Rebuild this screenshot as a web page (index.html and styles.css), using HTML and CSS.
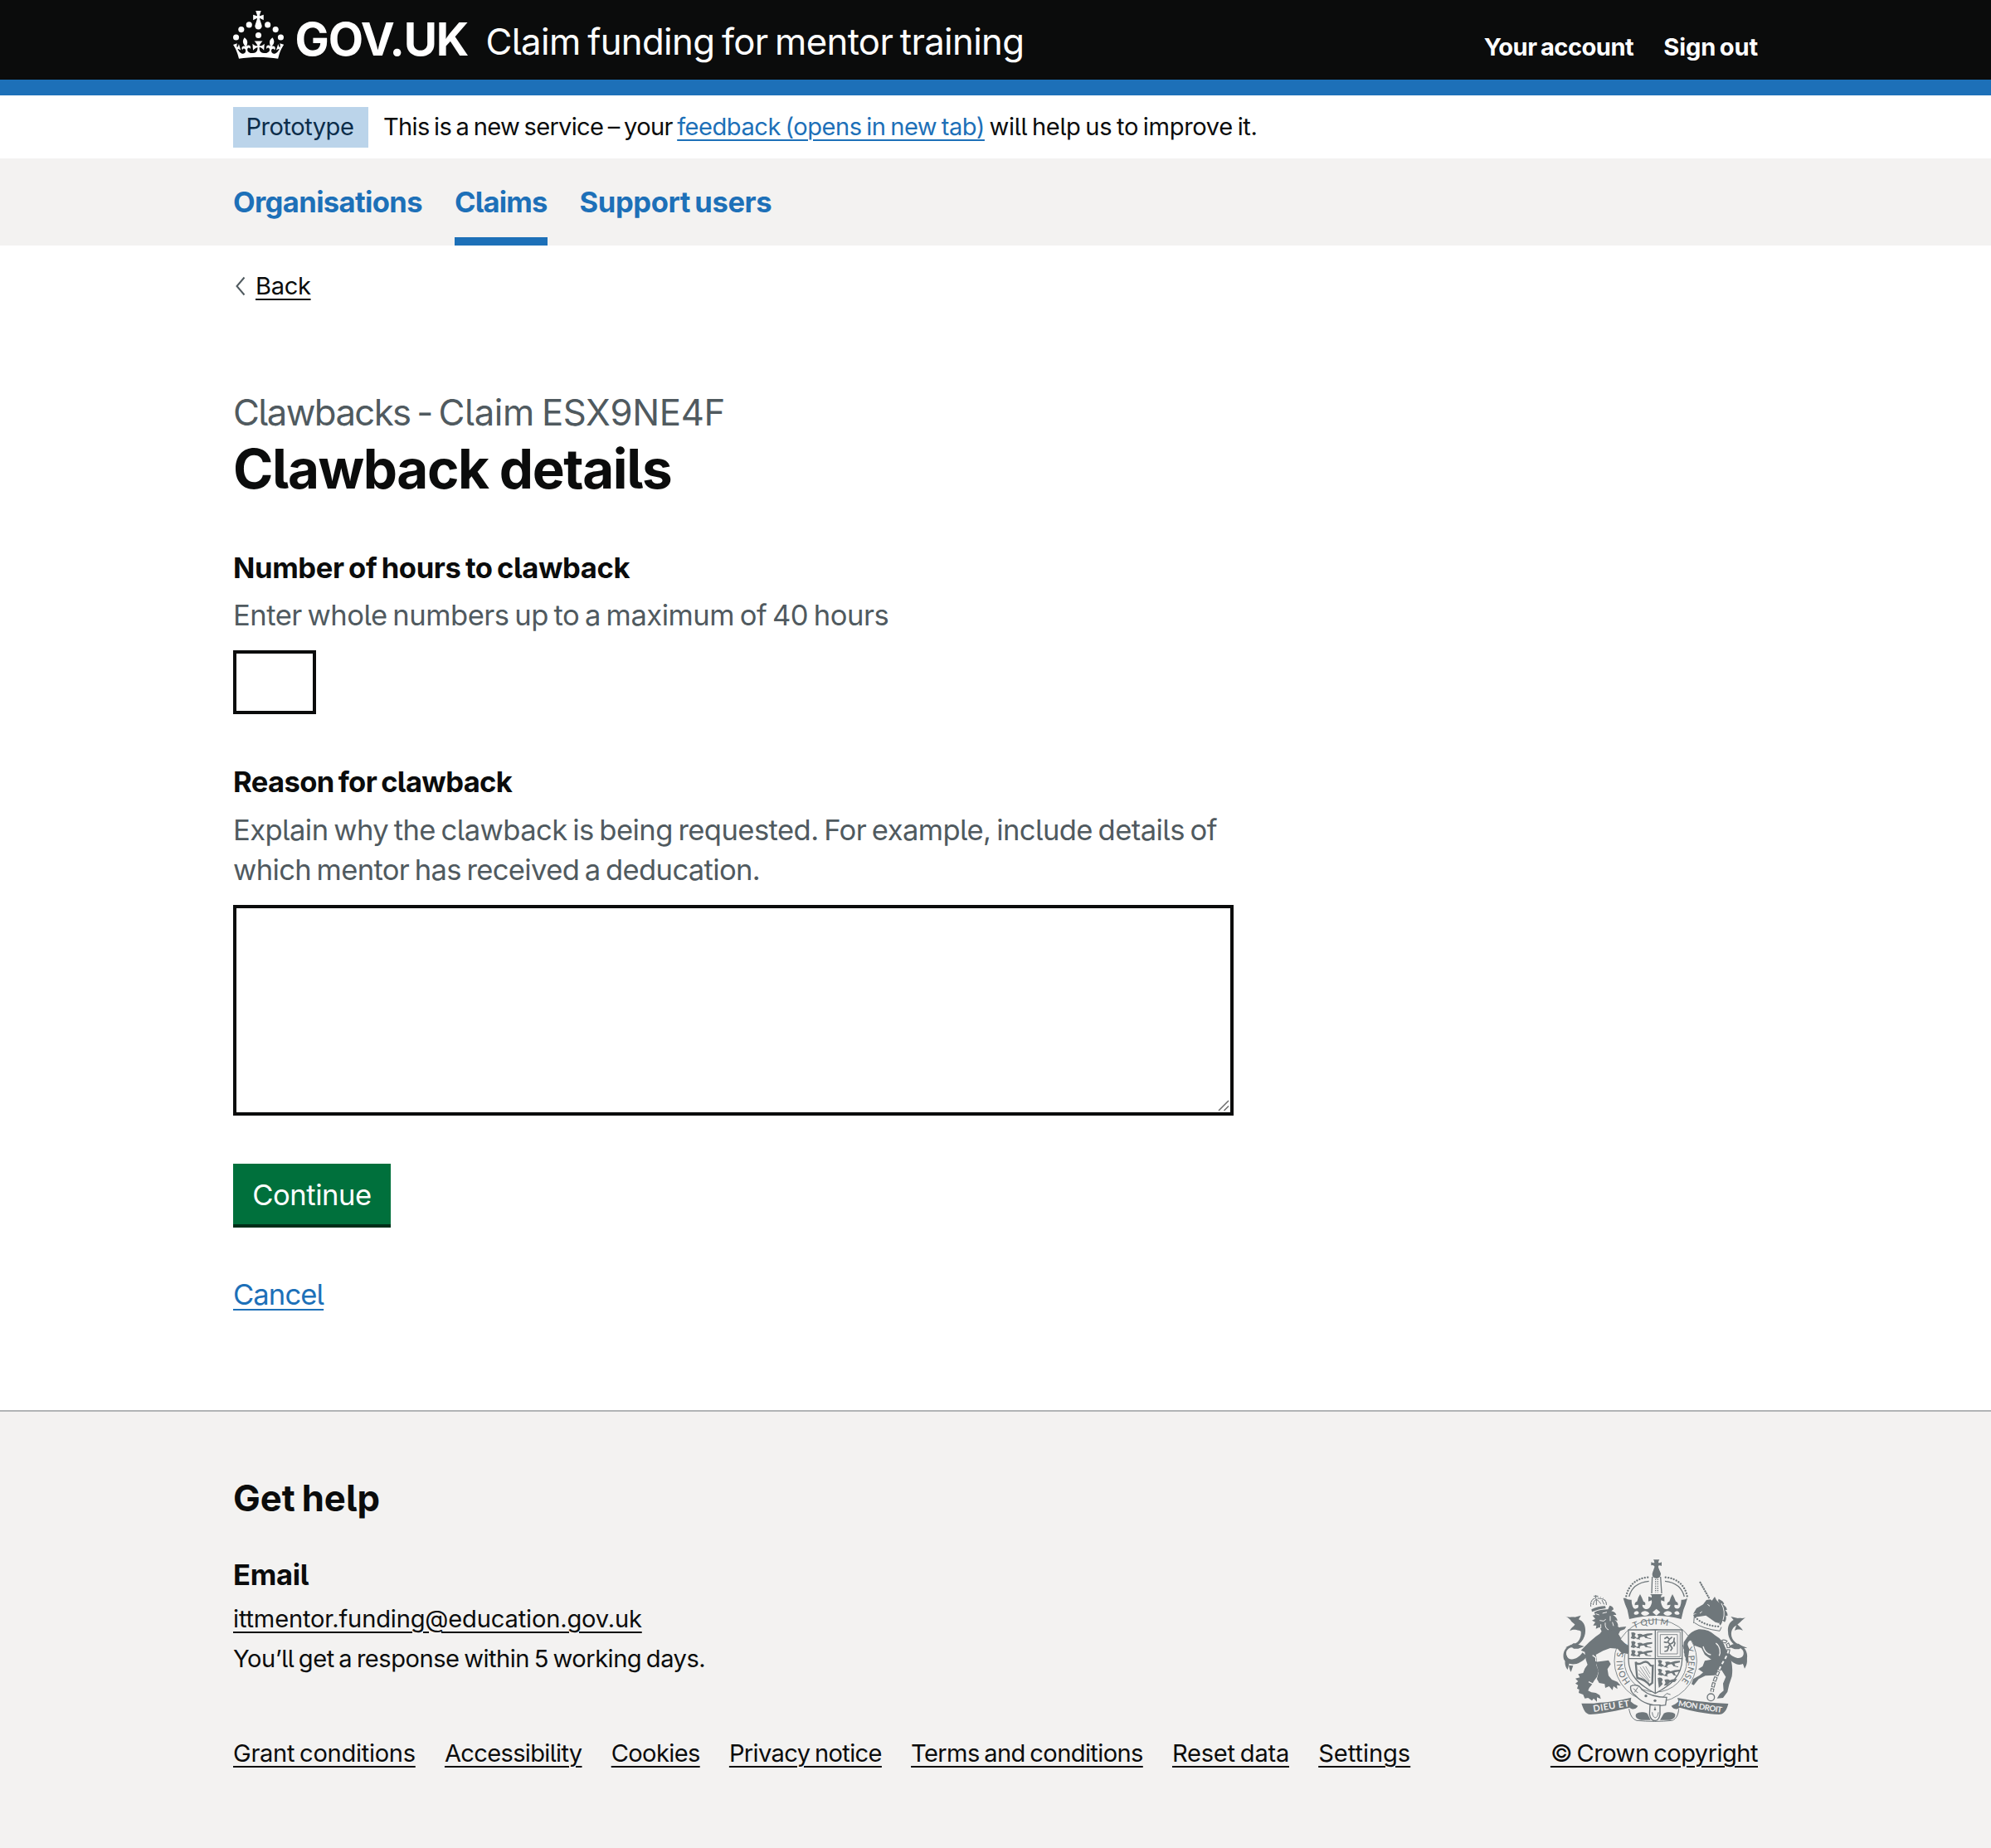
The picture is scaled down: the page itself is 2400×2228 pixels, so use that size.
FILE: index.html
```html
<!DOCTYPE html>
<html lang="en">
<head>
<meta charset="utf-8">
<title>Clawback details - Claim funding for mentor training</title>
<link rel="stylesheet" href="styles.css">
</head>
<body>
<header class="header">
  <div class="container header-row">
    <a class="logo" href="#">
      <svg class="logo-crown" viewBox="0 0 63.4 61" aria-hidden="true">
        <circle cx="20" cy="17.6" r="3.7"/><circle cx="10.2" cy="23.5" r="3.7"/><circle cx="3.7" cy="33.2" r="3.7"/><circle cx="31.7" cy="30.6" r="3.7"/><circle cx="43.3" cy="17.6" r="3.7"/><circle cx="53.2" cy="23.5" r="3.7"/><circle cx="59.7" cy="33.2" r="3.7"/>
        <path d="M33.1,9.8c.2-.1.3-.3.5-.5l4.6,2.4v-6.8l-4.6,1.5c-.1-.2-.3-.3-.5-.5l1.9-5.9h-6.7l1.9,5.9c-.2.1-.3.3-.5.5l-4.6-1.5v6.8l4.6-2.4c.1.2.3.3.5.5l-2.6,8c-.9,2.8,1.2,5.7,4.1,5.7h0c3,0,5.1-2.9,4.1-5.7l-2.6-8ZM37,37.9s-3.4,3.8-4.1,6.1c2.2,0,4.2-.5,6.4-2.8l-.7,8.5c-2-2.8-4.4-4.1-5.7-3.8.1,3.1.5,6.7,5.8,7.2,3.7.3,6.7-1.5,7-3.8.4-2.6-2-4.3-3.7-1.6-1.4-4.5,2.4-6.1,4.9-3.2-1.9-4.5-1.8-7.7,2.4-10.9,3,4,2.6,7.3-1.2,11.1,2.4-1.3,6.2,0,4,4.6-1.2-2.8-3.7-2.2-4.2.2-.3,1.7.7,3.7,3,4.2,1.9.3,4.7-.9,7-5.9-1.3,0-2.4.7-3.9,1.7l2.4-8c.6,2.3,1.4,3.7,2.2,4.5.6-1.6.5-2.8,0-5.3l5,1.8c-2.6,3.6-5.2,8.7-7.3,17.5-7.4-1.1-15.7-1.7-24.5-1.7h0c-8.8,0-17.1.6-24.5,1.7-2.1-8.9-4.7-13.9-7.3-17.5l5-1.8c-.5,2.5-.6,3.7,0,5.3.8-.8,1.6-2.3,2.2-4.5l2.4,8c-1.5-1-2.6-1.7-3.9-1.7,2.3,5,5.2,6.2,7,5.9,2.3-.4,3.3-2.4,3-4.2-.5-2.4-3-3.1-4.2-.2-2.2-4.6,1.6-6,4-4.6-3.7-3.7-4.2-7.1-1.2-11.1,4.2,3.2,4.3,6.4,2.4,10.9,2.5-2.8,6.3-1.3,4.9,3.2-1.8-2.7-4.1-1-3.7,1.6.3,2.3,3.3,4.1,7,3.8,5.4-.5,5.7-4.2,5.8-7.2-1.3-.2-3.7,1-5.7,3.8l-.7-8.5c2.2,2.3,4.2,2.7,6.4,2.8-.7-2.3-4.1-6.1-4.1-6.1h10.6,0Z"/>
      </svg>
      <span class="logo-text">GOV.UK</span>
    </a>
    <a class="service-name" href="#">Claim funding for mentor training</a>
    <nav class="account-nav">
      <a class="account-link" href="#">Your account</a>
      <a class="account-link sign-out" href="#">Sign out</a>
    </nav>
  </div>
</header>

<div class="container phase-banner">
  <strong class="tag">Prototype</strong>
  <p class="phase-text"><span class="phase-lead">This is a new service – your </span><a class="link phase-link" href="#">feedback (opens in new tab)</a> <span class="phase-tail">will help us to improve it.</span></p>
</div>

<nav class="primary-nav">
  <div class="container nav-row">
    <a class="nav-item nav-organisations" href="#">Organisations</a>
    <a class="nav-item nav-claims nav-current" href="#">Claims</a>
    <a class="nav-item nav-users" href="#">Support users</a>
  </div>
</nav>

<div class="container page">
  <a class="back" href="#">
    <svg class="back-icon" viewBox="0 0 13 24" aria-hidden="true"><path d="M11.5 1.5 2.5 12l9 10.5"/></svg>
    <span class="back-text">Back</span>
  </a>
  <main class="main">
    <h1 class="title"><span class="caption"><span class="caption-lead">Clawbacks - </span>Claim ESX9NE4F</span>Clawback details</h1>
    <div class="field field-first">
      <label class="label" for="hours">Number of hours to clawback</label>
      <div class="hint hint-hours">Enter whole numbers up to a maximum of 40 hours</div>
      <input class="input" id="hours" type="text">
    </div>
    <div class="field">
      <label class="label label-reason" for="reason">Reason for clawback</label>
      <div class="hint">Explain why the clawback is being requested. For example, include details of <span class="hint-end">which mentor has received a deducation.</span></div>
      <div class="textarea-wrap">
        <textarea class="textarea" id="reason"></textarea>
        <svg class="grip" viewBox="0 0 14 14" aria-hidden="true"><path d="M1 13 13 1M7.5 13 13 7.5"/></svg>
      </div>
    </div>
    <button class="button" type="button">Continue</button>
    <p class="cancel"><a class="link cancel-link" href="#">Cancel</a></p>
  </main>
</div>

<footer class="footer">
  <div class="container">
    <h2 class="footer-title">Get help</h2>
    <div class="footer-meta">
      <div class="footer-main">
        <h3 class="footer-subtitle">Email</h3>
        <p class="footer-text"><a class="footer-link link-email" href="#">ittmentor.funding@education.gov.uk</a></p>
        <p class="footer-text">You’ll get a response within 5 working days.</p>
        <ul class="footer-links">
          <li><a class="footer-link link-grant" href="#">Grant conditions</a></li>
          <li><a class="footer-link link-access" href="#">Accessibility</a></li>
          <li><a class="footer-link link-cookies" href="#">Cookies</a></li>
          <li><a class="footer-link link-privacy" href="#">Privacy notice</a></li>
          <li><a class="footer-link link-terms" href="#">Terms and conditions</a></li>
          <li><a class="footer-link link-reset" href="#">Reset data</a></li>
          <li><a class="footer-link link-settings" href="#">Settings</a></li>
        </ul>
      </div>
      <div class="copyright">
        <svg class="crest" viewBox="129 57 669 591" aria-hidden="true">
          <defs>
            <path id="garter-left" d="M373 500A119 119 0 0 1 372 348"/>
            <path id="garter-top" d="M386 308Q464 276 546 310"/>
            <path id="garter-right" d="M574 378A119 119 0 0 1 496 539"/>
          </defs>

          <!-- lion supporter -->
          <path class="thin-line" d="M230 228c-4-20 10-32 18-30v-12M286 222c2-16-10-24-32-24M240 190h16M238 222c2-12 6-18 12-20 8 4 12 10 16 16M250 200v22M270 204l8 16"/>
          <path class="beads fine" d="M232 218c0-12 6-20 16-24M284 214c0-12-8-20-30-22"/>
          <path d="M232 238q24-12 50-12l2 8q-26 2-50 13z"/>
          <path d="M242 248q22-10 50-10l6-14q14 4 14 14l-8 6q16 4 18 14l-12 0q16 10 16 22l-10-4q14 10 12 24l-10-6q18 12 26 14l-18 8-10 6-16 0-14 12-14-10-10-22-14 6 2-12-12 0 8-12-12-6 12-6-10-12 10-2z"/>
          <path d="M262 326l18-22 20 8 20 2 16-12 22-2-6 10-16 6-6 12 14 22 20 18 14 6 2 12-12-2-4 12-14-4-6 6-16-18-28-2-26 10-26 14 4 16-2 22 8 22-6 20-10 14-10 16-8 10-4 10 12 6 16 2 14 8 4 14-14-6 0 16-12-12-6 8-14-10-12 2-6-14-16-6 2-12-8-4 4-12-10-6 10-8-10-10 16-4-6-12 18-4 6-16 10-14-6-18-4-28-14-6 30-30 24-20z"/>
          <path d="M248 428l46-6 8 14-12 18 4 24 12 14 20 8 12 14-14-2 2 14-14-10-4 14-12-14-14 6-2-14-20-4-8-14 6-26z"/>
          <path class="gap" d="M236 404l12 8v14M222 500l20 10 8 24M296 330l20 28"/>
          <path class="gap fine" d="M248 254l12 4M272 252l16-4M262 278l14 2 8-6M282 286q-2 20 12 26M300 262v18M266 292v14M308 284l4 14"/>
          <path d="M216 408c-26 34-68 38-84 10-6-24 6-46 28-52 24-4 36-24 34-48-2-12-10-20-20-24l-14-12c-4-8-14-14-22-20 12 8 24 2 34 4l22-6-8 14c16 6 24 22 24 38 2 30-20 58-46 62-18 4-26 14-22 30 8 24 40 16 58-10z"/>
          <path d="M206 372l-18-6-20-6c-10 8-20 10-30 16 10 0 22-4 30 4h16zM174 290c-6 10-16 14-20 26 14-8 20-4 34-2 6 4 12 4 20 8-2-12-4-18-14-28zM142 404c-8 18-8 38 4 52l6-24zM150 440q4 20 8 24l8-22z"/>

          <!-- unicorn supporter -->
          <path class="horn" d="M624 138l34 60"/>
          <path d="M612 234l24-14 12-16 14-2 6 4 10-14 6 12 12 12 8 16 4 20-6 22-8 14-14-4-20-14-14-10-24 4-18 2-4-8 14-6-14 2z"/>
          <path d="M692 200q18 8 20 18l-4 2q14 10 14 20l-6 0q10 12 8 22l-6-2q4 14-4 24l-8-6q-2 12-8 18l-4-6q20-44-4-84z"/>
          <path class="beads" d="M608 266c20 24 60 34 92 34"/>
          <path class="line fine" d="M604 262l-2 26M604 286q30 22 92 30l6-14"/>
          <path d="M572 346q18-30 48-36 34-2 60 22 28 16 36 44 14 24 22 50 6 26 2 54l-10 30-6 26-16 22-22 2 10-16 14-12-2-26 10-24-14-22-18-22-20-18-24-18-12-24-22-8q-22 0-24 12l6 18-4 28-8 4-6-12 2-12-8-14 2-24z"/>
          <path d="M642 424l40-8 14 28-18 32-34 2-24 12-18 22-8-4 6-18 24-14 12-10-18-12 16-10z"/>
          <path class="gap" d="M682 360c16 12 18 34 12 46M636 372q6 26 28 30"/>
          <path class="gap fine" d="M652 220l8 6M632 246l-8 6M702 216q16 30 6 60"/>
          <path d="M724 408c18 30 56 44 70 10 6-24-8-44-26-52-20-8-32-24-30-44 2-14 10-22 18-26l14-12c8-8 16-14 26-22-10 12-24 6-34 8l-26-6 10 12c-16 8-22 26-20 42 0 26 16 48 40 58 14 6 20 16 14 30-10 16-36 6-50-10z"/>
          <path d="M726 372l18-8 20-2c10 8 22 10 32 16-14 0-22-4-30 4h-16zM758 290c8 8 16 14 22 24-14-6-20-4-30 0zM790 402c8 18 6 34-4 50l-8-22z"/>
          <path class="chain" d="M704 354c20-6 28 18 22 38-6 22-20 36-30 60-10 24-22 44-28 84"/>
          <path class="chain-core" d="M704 354c20-6 28 18 22 38-6 22-20 36-30 60-10 24-22 44-28 84"/>
          <circle class="line" cx="664" cy="556" r="13"/>

          <!-- garter -->
          <circle class="ring" cx="464" cy="424" r="134"/>
          <circle class="line thin-edge" cx="464" cy="424" r="149"/>
          <circle class="line thin-edge" cx="464" cy="424" r="113"/>
          <text class="motto"><textPath href="#garter-left">HONI SOI</textPath></text>
          <text class="motto"><textPath href="#garter-top">T QUI M</textPath></text>
          <text class="motto"><textPath href="#garter-right">Y PENSE</textPath></text>

          <!-- limbs resting on the garter -->
          <path d="M290 322l24-12 24 36 24 24 18 6-2 14-10-2-4 12-12-4-8 4-16-18-30-14z"/>
          <path d="M580 336l26-18 6 30-22 2q-10 4-10 16l6 16-4 30-8 4-6-12 2-12-6-14 2-22z"/>

          <!-- royal crown -->
          <path d="M460 82q-6-6-12-3V67q8 4 12 2-1-7-4-11h22q-4 5-4 11 5 2 12-2v14q-7-4-12-1-1 7 3 14h-20q4-7 3-12z"/>
          <path d="M458 92h18q4 8 7 16 0 16-14 18-18-2-17-16 2-10 6-18z"/>
          <path class="line" d="M452 120l-2 60M482 120l4 60"/>
          <path class="dots" d="M464 128v50M472 128v50"/>
          <path class="beads" d="M358 190c8-40 38-66 80-68M578 190c-8-40-38-66-80-68"/>
          <path class="line" d="M368 192c8-32 32-52 72-56M568 192c-8-32-32-52-70-56"/>
          <path fill-rule="evenodd" d="M355 197q10 8 22 6 0 16 4 24 4 12 14 8 10-4 6-14l-12 2q-2-10 8-14 2-12 11-26 8 14 12 26 10 4 6 14l-10-2q0 12 12 16 14 2 20-16 4-10 2-16l-12 4v-18l12 4q2-8-6-12h46q-8 4-6 12l12-4v18l-12-4q-2 8 2 16 6 18 20 16 10-4 12-16l-12 2q-2-10 8-14 4-14 11-26 8 14 12 26 10 4 8 14l-12-2q-4 10 6 14 10 2 14-8 4-10 4-24 12 2 22-6-6 24-14 42l-8 34q-90-24-188 0l-7-34q-10-22-15-42zM396 244q-11 2-10 10 8 8 18-2-1-8-8-8zM426 244q-16 2-14 10 12 14 29 0-1-8-15-10zM467 236l-14 12 14 12 14-12zM508 244q-14 2-15 10 16 14 30 0 0-8-15-10zM542 244q-10 2-10 8 8 10 19 2-1-8-9-10z"/>

          <!-- quartered shield -->
          <path class="shield" d="M366 312h194v106c0 62-44 96-97 124-53-28-97-62-97-124z"/>
          <path class="line" d="M463 312v230M366 416h196"/>
          <path class="line thin-edge" d="M471 319h82v90h-82zM481 329h62v70h-62z"/>
          <path d="M376 322q12-4 16 4l-4 8 6 6-8 6-12-4 4-8zM398 328q12-4 20 2 14-6 34-6v6l-20 4 4 8h-8l-6-6-12 2-6 8h-8l6-10zM376 354q12-4 16 4l-4 8 6 6-8 6-12-4 4-8zM398 360q12-4 20 2 14-6 34-6v6l-20 4 4 8h-8l-6-6-12 2-6 8h-8l6-10zM376 386q12-4 16 4l-4 8 6 6-8 4-12-4 4-8zM398 390q12-4 20 2 14-6 34-6v6l-20 4 4 8h-8l-6-6-12 2-6 8h-8l6-10zM472 422q12-4 16 4l-4 8 10 6-8 6-14-4 4-8zM498 428q12-4 20 2 14-6 34-6v6l-20 4 4 8h-8l-6-6-12 2-6 8h-8l6-10zM472 454q12-4 16 4l-4 8 10 6-8 6-14-4 4-8zM498 460q12-4 20 2 14-6 34-6v6l-20 4 4 8h-8l-6-6-12 2-6 8h-8l6-10zM472 486q14-4 18 6l-4 8 4 8-14 14zM496 492q12-4 20 2 10-6 26-4l-8 10-18 2-10 10-12 2 6-10z"/>
          <path class="thin-line" d="M388 340l20 6M428 340l20 4M388 372l20 6M428 372l20 4M388 404l20 4M428 404l20 2M488 442l20 6M528 442l18 4M488 474l20 6M528 474l12 4"/>
          <path class="thin-line lion-rampant" d="M496 344l10-6 8 8-6 10 8 8 8-4 8-8M514 346l10-8M516 364l-8 10-12 0M516 366l8 12-6 10M512 374l-6 14-10 2M494 356l12 2M532 340l-2 12 4 8-4 12"/>
          <path class="harp" d="M392 428q6 12 22 4 18-10 26 2 6 10 14 8l-2 62-10 8q-14-20-44-26l-2-14z"/>
          <path class="strings" d="M408 446l34 52M402 456l38 44M418 444l26 42M428 444l16 28M402 470l28 26"/>

          <!-- strap and motto scroll -->
          <path class="strap" d="M374 516c14-8 34-4 40 12 24 20 56 28 90 28l-4 28c-44 8-86-8-108-34-14-8-20-20-18-34z"/>
          <path class="strap" d="M444 584h36v34c-6 32-32 28-38 0z"/>
          <path class="thin-line" d="M384 524l16 16M400 520l-12 18M462 590v12M452 610c2 26 20 26 22 0M490 556l14-14 14 4"/>
          <circle cx="429" cy="551" r="5"/><circle cx="462" cy="568" r="5"/><circle cx="462" cy="600" r="4"/>
          <path d="M196 578q40 2 64-3c44-2 82-10 116-18l-2 14c8 8 16 12 26 16-8 14-22 14-30 6-48 12-88 20-142 25-18-2-24-16-32-40z"/>
          <path d="M727 579l-64-4c-44-4-82-10-120-17l4 13c-8 8-16 12-26 16 8 14 22 14 30 6 48 14 88 22 142 25 18 0 28-14 34-39z"/>
          <path class="thin-line" d="M368 598c4 20 10 36 28 42 40 4 90 4 128 0 16-6 22-22 24-42"/>
          <path d="M394 616c8-8 28-8 40-2l12 24h-34c-16-2-24-12-18-22zM534 616c-8-8-28-8-40-2l-14 24h36c14-2 22-12 18-22z"/>
          <text class="scroll-text" transform="translate(240 609) rotate(-9)" textLength="132">DIEU ET</text>
          <text class="scroll-text small" transform="translate(545 587) rotate(9)" textLength="160">MON DROIT</text>
        </svg>
        <a class="footer-link link-copyright" href="#">© Crown copyright</a>
      </div>
    </div>
  </div>
</footer>
</body>
</html>
```
FILE: styles.css
```css
* { box-sizing: border-box; }

body {
  margin: 0;
  background: #fff;
  color: #0b0c0c;
  font-family: Inter, Roboto, sans-serif;
  font-feature-settings: "cv05";
  font-size: 34.6px;
  line-height: 48px;
  letter-spacing: -.5px;
  word-spacing: -2.5px;
}

h1, h2, h3, p, ul { margin: 0; padding: 0; }
a { color: inherit; text-decoration: none; }

.container { width: 1838px; margin: 0 auto; }

.header {
  height: 115px;
  background: #0b0c0c;
  border-bottom: 19px solid #1d70b8;
  color: #fff;
}
.header-row { display: flex; align-items: flex-start; line-height: 60px; }
.logo { display: flex; align-items: flex-start; width: 304.5px; }
.logo-crown { width: 61px; height: 58.7px; margin: 12.5px 13.5px 0 0; fill: #fff; }
.logo-text { margin-top: 16.5px; font-size: 55px; font-weight: 700; letter-spacing: -1.1px; }
.service-name { margin-top: 20.8px; font-size: 43.7px; letter-spacing: -.66px; word-spacing: -3px; white-space: nowrap; }
.account-nav {
  display: flex;
  gap: 36px;
  margin: 37px 0 0 auto;
  font-size: 29.1px;
  font-weight: 700;
  line-height: 40px;
  word-spacing: -2px;
}
.sign-out { letter-spacing: -.15px; }

.phase-banner { display: flex; gap: 18px; height: 76px; padding-top: 14px; font-size: 29.1px; word-spacing: -2px; }
.tag {
  width: 163px;
  height: 49px;
  padding-left: 15.5px;
  background: #bbd4ea;
  color: #0c2d4a;
  font-weight: 400;
}
.phase-text { white-space: nowrap; }
.phase-lead { letter-spacing: -.7px; }
.phase-tail { letter-spacing: -.35px; }

.link { color: #1d70b8; }
.link, .footer-link, .back-text {
  text-decoration: underline;
  text-decoration-thickness: 2px;
  text-underline-offset: 5px;
}

.primary-nav { height: 105px; background: #f3f2f1; }
.nav-row { display: flex; gap: 39px; line-height: 105px; font-weight: 700; color: #1d70b8; }
.nav-organisations { letter-spacing: -.64px; }
.nav-claims { letter-spacing: -.83px; }
.nav-users { letter-spacing: -.42px; }
.nav-current { box-shadow: inset 0 -10px #1d70b8; }

.page { padding-top: 28.6px; }
.back { display: flex; align-items: center; width: max-content; gap: 12px; font-size: 29.1px; line-height: 40px; letter-spacing: -.35px; }
.back-icon { width: 13px; height: 24px; margin-left: 2px; fill: none; stroke: #505a5f; stroke-width: 2; }
.main { width: 1206px; padding-top: 104.4px; }
.title { font-size: 65.5px; font-weight: 700; line-height: 79px; letter-spacing: -1.4px; word-spacing: -1px; }
.caption { display: block; color: #505a5f; font-size: 43.7px; font-weight: 400; line-height: 57px; letter-spacing: -.35px; word-spacing: -3px; }
.caption-lead { letter-spacing: -1.6px; }
.field { display: flex; flex-direction: column; margin-top: 57px; }
.field-first { margin-top: 55px; }
.label { margin-bottom: 9.5px; font-weight: 700; letter-spacing: -.36px; }
.label-reason { letter-spacing: -.63px; }
.hint { margin-bottom: 19px; color: #505a5f; letter-spacing: -.58px; }
.hint-hours { letter-spacing: -.51px; }
.hint-end { letter-spacing: -.66px; }
.input, .textarea { display: block; border: 4px solid #0b0c0c; border-radius: 0; background: #fff; outline: 0; padding: 8px; font: inherit; }
.input { width: 100px; height: 77px; }
.textarea-wrap { display: grid; }
.textarea { grid-area: 1 / 1; width: 1206px; height: 254.5px; resize: none; }
.grip { grid-area: 1 / 1; place-self: end; width: 14px; height: 14px; margin: 0 5px 5px 0; fill: none; stroke: #6b6b6b; stroke-width: 1.5; }
.button {
  display: block;
  width: 190px;
  height: 73px;
  margin-top: 57.5px;
  padding: 0;
  border: 0;
  background: #00703c;
  box-shadow: 0 4px #002d18;
  color: #fff;
  font: inherit;
  font-feature-settings: inherit;
  line-height: 74px;
  letter-spacing: -.45px;
}
.cancel { margin-top: 60.4px; }
.cancel-link { letter-spacing: -.9px; }

.footer { margin-top: 115.6px; height: 528px; padding-top: 76px; border-top: 2px solid #b1b4b6; background: #f3f2f1; }
.footer-title { font-size: 43.7px; line-height: 57px; letter-spacing: 0; }
.footer-meta { display: flex; justify-content: space-between; align-items: flex-end; margin-top: 38.8px; font-size: 29.1px; word-spacing: -2px; }
.footer-subtitle { margin-bottom: 6px; font-size: 34.6px; letter-spacing: -.3px; }
.footer-links { display: flex; gap: 35.2px; margin-top: 66.5px; list-style: none; white-space: nowrap; }
.link-email { letter-spacing: -.17px; }
.link-grant { letter-spacing: -.3px; }
.link-access { letter-spacing: -.68px; }
.link-cookies { letter-spacing: -.64px; }
.link-privacy { letter-spacing: -.64px; }
.link-terms { letter-spacing: -.62px; }
.link-reset { letter-spacing: -.24px; }
.link-settings { letter-spacing: -.05px; }
.link-copyright { letter-spacing: -.54px; }

.copyright { display: flex; flex-direction: column; align-items: flex-end; }
.crest { width: 223px; height: 197px; margin: 0 12px 13px 0; fill: #6f777b; }
.crest .line, .crest .thin-line, .crest .chain, .crest .chain-core, .crest .beads,
.crest .dots, .crest .horn, .crest .gap, .crest .harp, .crest .strings { fill: none; stroke: #6f777b; }
.crest .line { stroke-width: 4; }
.crest .thin-edge { stroke-width: 2.5; }
.crest .thin-line { stroke-width: 3; }
.crest .lion-rampant { stroke-width: 5; }
.crest .chain { stroke-width: 13; stroke-dasharray: 18 4; }
.crest .chain-core { stroke: #f3f2f1; stroke-width: 6; stroke-dasharray: 12 10; stroke-dashoffset: -3; }
.crest .beads { stroke-width: 7; stroke-linecap: round; stroke-dasharray: .1 10; }
.crest .dots { stroke-width: 4; stroke-dasharray: 4 4; }
.crest .horn { stroke-width: 6; stroke-dasharray: 7 2; }
.crest .gap { stroke: #f3f2f1; stroke-width: 4; }
.crest .fine { stroke-width: 3; }
.crest .ring { fill: none; stroke: #f3f2f1; stroke-width: 30; }
.crest .shield, .crest .strap { fill: #f3f2f1; stroke: #6f777b; stroke-width: 4; }
.crest .harp { stroke-width: 7; }
.crest .strings { stroke-width: 2; }
.crest .motto { font: 500 31px Lato, sans-serif; letter-spacing: 1px; word-spacing: 0; }
.crest .scroll-text { fill: #f3f2f1; font: 700 33px Lato, sans-serif; letter-spacing: 0; word-spacing: 0; }
.crest .small { font-size: 29px; }
```
